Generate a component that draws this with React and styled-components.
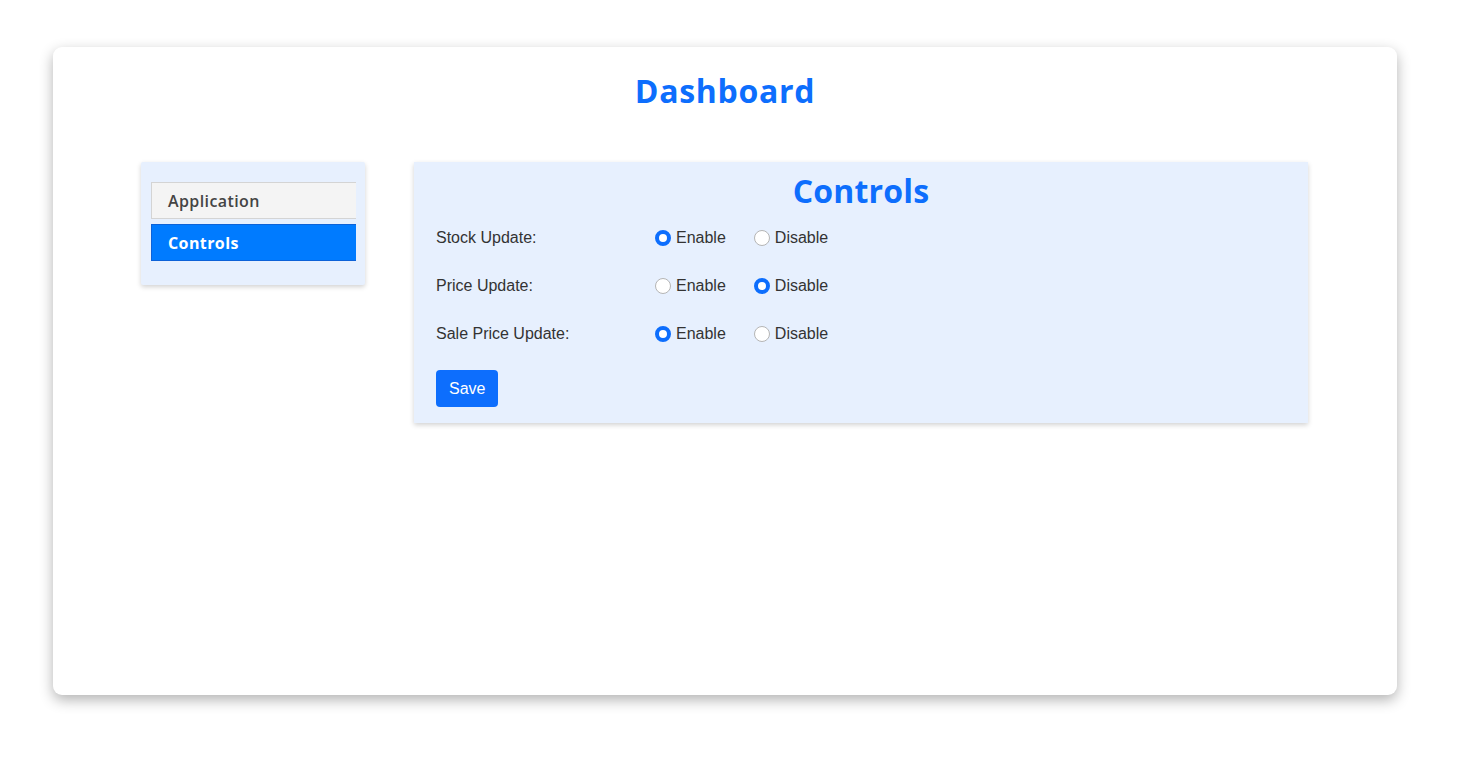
import { useState } from 'react';
import styled, { createGlobalStyle } from 'styled-components';

const GlobalStyle = createGlobalStyle`
  body {
    margin: 0;
    background: #fff;
    font-family: "Liberation Sans", Arial, sans-serif;
  }
`;

const Page = styled.div`
  padding: 47px 87px 0 53px;
  height: 762px;
  box-sizing: border-box;
`;

const Card = styled.div`
  height: 648px;
  padding: 20px 0;
  box-sizing: border-box;
  background: #fff;
  border-radius: 9px;
  box-shadow: 0 5px 14px rgba(0, 0, 0, 0.3);
`;

const Title = styled.h1`
  margin: 0 0 47px;
  font-family: "Open Sans", sans-serif;
  font-weight: 700;
  font-size: 32px;
  line-height: 48px;
  text-align: center;
  color: #0d6efd;
  letter-spacing: 0.7px;
`;

const Layout = styled.div`
  display: flex;
  justify-content: center;
  align-items: flex-start;
  gap: 49px;
  padding-right: 1px;
`;

const Sidebar = styled.div`
  width: 224px;
  padding: 20px 9px 24px 10px;
  box-sizing: border-box;
  background: #e7f0fe;
  border-radius: 2px;
  box-shadow: 0 2px 5px rgba(0, 0, 0, 0.18);
  display: flex;
  flex-direction: column;
  gap: 5px;
`;

const NavItem = styled.div`
  height: 37px;
  box-sizing: border-box;
  padding: 0 16px;
  display: flex;
  align-items: center;
  font-family: "Open Sans", sans-serif;
  font-weight: ${p => (p.$active ? 700 : 600)};
  font-size: 16px;
  letter-spacing: 0.4px;
  color: ${p => (p.$active ? '#fff' : '#444')};
  background: ${p => (p.$active ? '#007bff' : '#f4f4f4')};
  border: 1px solid ${p => (p.$active ? '#0d62d8' : '#d4d4d4')};
  border-right: none;
  cursor: pointer;
`;

const Panel = styled.div`
  width: 894px;
  padding: 10px 22px 16px;
  box-sizing: border-box;
  background: #e7f0fe;
  box-shadow: 0 2px 5px rgba(0, 0, 0, 0.18);
`;

const PanelTitle = styled.h2`
  margin: 0 0 4px;
  font-family: "Open Sans", sans-serif;
  font-weight: 700;
  font-size: 32px;
  line-height: 38px;
  text-align: center;
  color: #0d6efd;
  letter-spacing: 0.2px;
`;

const Row = styled.div`
  height: 48px;
  display: flex;
  align-items: center;
`;

const Label = styled.span`
  width: 219px;
  font-size: 16px;
  color: #333;
`;

const Option = styled.label`
  display: flex;
  align-items: center;
  gap: 5px;
  margin-right: 28px;
  font-size: 16px;
  color: #333;
  cursor: pointer;
`;

const Radio = styled.input`
  appearance: none;
  margin: 0;
  width: 16px;
  height: 16px;
  border-radius: 50%;
  box-sizing: border-box;
  background: #fff;
  border: 1px solid #b5b5b5;
  cursor: pointer;

  &:checked {
    border: 4.5px solid #0d6efd;
  }
`;

const SaveButton = styled.button`
  margin-top: 12px;
  height: 37px;
  padding: 0 13px;
  font-family: "Liberation Sans", Arial, sans-serif;
  font-size: 16px;
  color: #fff;
  background: #0d6efd;
  border: none;
  border-radius: 4px;
  cursor: pointer;
`;

const settings = [
  { key: 'stock', label: 'Stock Update:' },
  { key: 'price', label: 'Price Update:' },
  { key: 'sale', label: 'Sale Price Update:' },
];

const App = () => {
  const [active, setActive] = useState('controls');
  const [values, setValues] = useState({ stock: 'enable', price: 'disable', sale: 'enable' });

  const handleChange = (key, value) => {
    setValues({ ...values, [key]: value });
  };

  return (
    <>
      <GlobalStyle />
      <Page>
        <Card>
          <Title>Dashboard</Title>
          <Layout>
            <Sidebar>
              <NavItem $active={active === 'application'} onClick={() => setActive('application')}>
                Application
              </NavItem>
              <NavItem $active={active === 'controls'} onClick={() => setActive('controls')}>
                Controls
              </NavItem>
            </Sidebar>
            <Panel>
              <PanelTitle>Controls</PanelTitle>
              {settings.map(s => (
                <Row key={s.key}>
                  <Label>{s.label}</Label>
                  <Option>
                    <Radio
                      type="radio"
                      name={s.key}
                      checked={values[s.key] === 'enable'}
                      onChange={() => handleChange(s.key, 'enable')}
                    />
                    Enable
                  </Option>
                  <Option>
                    <Radio
                      type="radio"
                      name={s.key}
                      checked={values[s.key] === 'disable'}
                      onChange={() => handleChange(s.key, 'disable')}
                    />
                    Disable
                  </Option>
                </Row>
              ))}
              <SaveButton type="button">Save</SaveButton>
            </Panel>
          </Layout>
        </Card>
      </Page>
    </>
  );
};

export default App;
